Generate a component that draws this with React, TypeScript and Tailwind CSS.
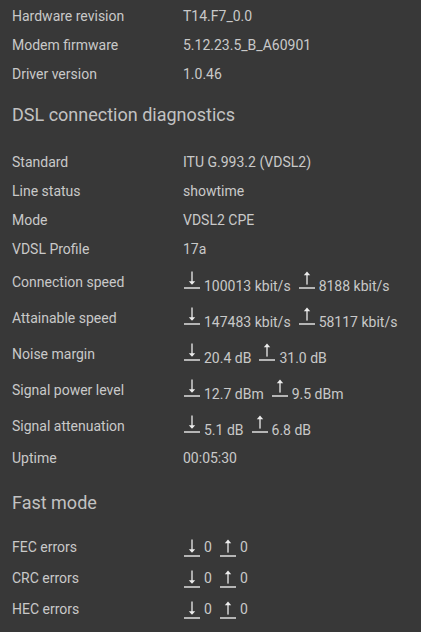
import React from 'react';

type Pair = { down: string; up: string };

const info: [string, string][] = [
  ['Hardware revision', 'T14.F7_0.0'],
  ['Modem firmware', '5.12.23.5_B_A60901'],
  ['Driver version', '1.0.46'],
];

const plain: [string, string][] = [
  ['Standard', 'ITU G.993.2 (VDSL2)'],
  ['Line status', 'showtime'],
  ['Mode', 'VDSL2 CPE'],
  ['VDSL Profile', '17a'],
];

const stats: [string, Pair][] = [
  ['Connection speed', { down: '100013 kbit/s', up: '8188 kbit/s' }],
  ['Attainable speed', { down: '147483 kbit/s', up: '58117 kbit/s' }],
  ['Noise margin', { down: '20.4 dB', up: '31.0 dB' }],
  ['Signal power level', { down: '12.7 dBm', up: '9.5 dBm' }],
  ['Signal attenuation', { down: '5.1 dB', up: '6.8 dB' }],
];

const errors: string[] = ['FEC errors', 'CRC errors', 'HEC errors'];

function Arrow({ dir, className = '' }: { dir: 'down' | 'up'; className?: string }) {
  return (
    <svg
      width="16"
      height="20"
      viewBox="0 0 16 20"
      className={`shrink-0 text-[#ececec] ${className}`}
      fill="currentColor"
    >
      <rect x="0" y="16.3" width="16" height="1.4" />
      {dir === 'down' ? (
        <>
          <rect x="7.35" y="0.5" width="1.3" height="10.5" />
          <path d="M4.8 10.2h6.4l-3.2 3.6z" />
        </>
      ) : (
        <>
          <rect x="7.35" y="3.8" width="1.3" height="9.8" />
          <path d="M4.8 4.3h6.4l-3.2-3.8z" />
        </>
      )}
    </svg>
  );
}

function Row({ label, value }: { label: string; value: string }) {
  return (
    <div className="flex items-center h-[29px]">
      <div className="w-[171px] shrink-0">{label}</div>
      <div>{value}</div>
    </div>
  );
}

function StatRow({ label, pair }: { label: string; pair: Pair }) {
  return (
    <div className="flex items-center h-[36px]">
      <div className="w-[171px] shrink-0">{label}</div>
      <div className="flex items-end h-5 mt-2">
        <Arrow dir="down" className="ml-px mb-[5px]" />
        <span className="ml-1">{pair.down}</span>
        <Arrow dir="up" className="ml-2 mb-[5px]" />
        <span className="ml-1">{pair.up}</span>
      </div>
    </div>
  );
}

function ErrorRow({ label }: { label: string }) {
  return (
    <div className="flex items-center h-[31px]">
      <div className="w-[171px] shrink-0">{label}</div>
      <div className="flex items-end h-5">
        <Arrow dir="down" className="ml-px mb-[-2px]" />
        <span className="ml-1">0</span>
        <Arrow dir="up" className="ml-2 mb-[-2px]" />
        <span className="ml-1">0</span>
      </div>
    </div>
  );
}

export default function App() {
  return (
    <div
      className="w-[421px] h-[632px] overflow-hidden bg-[#383838] text-[#c9c9c9] text-[14px] leading-5 px-3 pt-[1.5px]"
      style={{ fontFamily: 'Roboto, "Liberation Sans", sans-serif' }}
    >
      {info.map(([l, v]) => (
        <Row key={l} label={l} value={v} />
      ))}

      <h2 className="text-[18px] leading-6 text-[#c2c2c2] mt-[14px] mb-[21px]">
        DSL connection diagnostics
      </h2>

      {plain.map(([l, v]) => (
        <Row key={l} label={l} value={v} />
      ))}
      {stats.map(([l, p]) => (
        <StatRow key={l} label={l} pair={p} />
      ))}
      <Row label="Uptime" value="00:05:30" />

      <h2 className="text-[18px] leading-6 text-[#c2c2c2] mt-[18px] mb-[17px]">Fast mode</h2>

      {errors.map((l) => (
        <ErrorRow key={l} label={l} />
      ))}
    </div>
  );
}
